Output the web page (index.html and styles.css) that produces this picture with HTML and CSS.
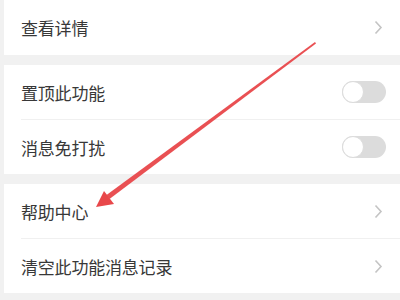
FILE: index.html
```html
<!DOCTYPE html>
<html lang="zh-CN">
<head>
<meta charset="utf-8">
<link rel="stylesheet" href="styles.css">
</head>
<body>
<div class="page">
  <div class="group">
    <div class="row first"><span class="label">查看详情</span><span class="chev"><svg width="9" height="15" viewBox="0 0 9 15"><path d="M1.5 1.5 L7 7.5 L1.5 13.5" fill="none" stroke="#c4c4c4" stroke-width="1.6"/></svg></span></div>
  </div>
  <div class="gap"></div>
  <div class="group">
    <div class="row"><span class="label">置顶此功能</span><span class="toggle"><span class="knob"></span></span></div>
    <div class="divider"></div>
    <div class="row"><span class="label">消息免打扰</span><span class="toggle"><span class="knob"></span></span></div>
  </div>
  <div class="gap"></div>
  <div class="group">
    <div class="row"><span class="label">帮助中心</span><span class="chev"><svg width="9" height="15" viewBox="0 0 9 15"><path d="M1.5 1.5 L7 7.5 L1.5 13.5" fill="none" stroke="#c4c4c4" stroke-width="1.6"/></svg></span></div>
    <div class="divider"></div>
    <div class="row"><span class="label">清空此功能消息记录</span><span class="chev"><svg width="9" height="15" viewBox="0 0 9 15"><path d="M1.5 1.5 L7 7.5 L1.5 13.5" fill="none" stroke="#c4c4c4" stroke-width="1.6"/></svg></span></div>
  </div>
  <div class="gap"></div>
  <svg class="arrow" width="400" height="300" viewBox="0 0 400 300">
    <polygon points="315,42 316,43.5 109.5,199 106.5,195" fill="#e8474a" opacity="0.95"/>
    <polygon points="96,207 104,191 114,204" fill="#e8474a"/>
  </svg>
</div>
</body>
</html>
```
FILE: styles.css
```css
html, body {
  margin: 0;
  padding: 0;
  background: #f1f1f1;
}
.page {
  position: relative;
  width: 400px;
  height: 300px;
  overflow: hidden;
  padding-left: 4px;
  box-sizing: border-box;
  font-family: "Noto Sans CJK SC", "Noto Sans", sans-serif;
}
.group {
  background: #ffffff;
}
.gap {
  height: 10px;
}
.row {
  height: 54px;
  display: flex;
  align-items: center;
  justify-content: space-between;
  padding-left: 17px;
  padding-right: 14px;
}
.row.first {
  height: 55px;
}
.label {
  font-size: 17px;
  color: #383838;
  letter-spacing: -0.2px;
}
.chev {
  display: flex;
  margin-right: 3px;
}
.divider {
  height: 1px;
  margin-left: 17px;
  background: #f0f0f0;
}
.toggle {
  width: 44px;
  height: 22px;
  border-radius: 11px;
  background: #dcdcdc;
  position: relative;
}
.knob {
  position: absolute;
  left: 0;
  top: 0;
  width: 22px;
  height: 22px;
  box-sizing: border-box;
  border-radius: 50%;
  background: #ffffff;
  border: 1.5px solid #dcdcdc;
}
.arrow {
  position: absolute;
  left: 0;
  top: 0;
}
```
